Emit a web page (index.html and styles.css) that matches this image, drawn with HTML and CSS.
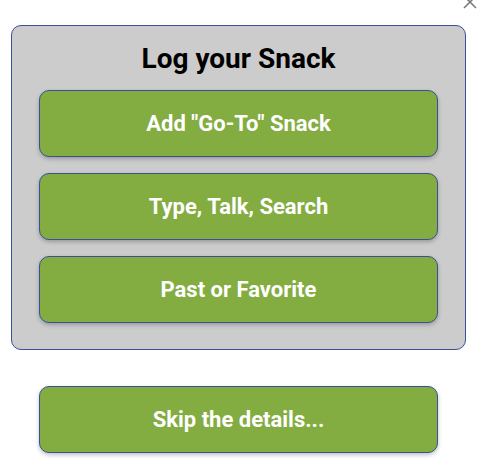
FILE: index.html
```html
<!DOCTYPE html>
<html>
<head>
<meta charset="utf-8">
<link rel="stylesheet" href="styles.css">
</head>
<body>
<div class="page">
  <button class="close" aria-label="Close">
    <svg width="16" height="16" viewBox="0 0 16 16"><path d="M2 2 L14 14 M14 2 L2 14" stroke="#7a7a7a" stroke-width="1.6" fill="none"/></svg>
  </button>
  <section class="panel">
    <h1 class="title">Log your Snack</h1>
    <div class="actions">
      <button class="btn">Add "Go-To" Snack</button>
      <button class="btn">Type, Talk, Search</button>
      <button class="btn">Past or Favorite</button>
    </div>
  </section>
  <div class="skip-row">
    <button class="btn">Skip the details...</button>
  </div>
</div>
</body>
</html>
```
FILE: styles.css
```css
* { box-sizing: border-box; }
html, body { margin: 0; padding: 0; background: #ffffff; }
body { font-family: Roboto, "Noto Sans", sans-serif; width: 480px; height: 470px; overflow: hidden; }
.page { position: relative; padding: 25px 14px 0 11px; }
.close {
  position: absolute; top: -6px; right: 2px;
  width: 16px; height: 16px; padding: 0; border: 0; background: transparent;
}
.close svg { display: block; }
.panel {
  width: 455px;
  background: #cccccc;
  border: 1px solid #3a4f9c;
  border-radius: 10px;
  padding: 0 27px 26px 27px;
}
.title {
  margin: 0; height: 64px;
  display: flex; align-items: center; justify-content: center;
  font-size: 28px; font-weight: 700; color: #000;
}
.actions { display: flex; flex-direction: column; gap: 16px; }
.btn {
  display: flex; align-items: center; justify-content: center;
  width: 399px; height: 67px;
  background: #83ac41;
  border: 1px solid #3a4f9c;
  border-radius: 10px;
  box-shadow: 0 2px 4px rgba(0,0,0,0.25);
  color: #ffffff;
  font-family: Roboto, "Noto Sans", sans-serif;
  font-size: 22px; font-weight: 700;
  padding: 0;
}
.skip-row { padding: 36px 0 0 28px; }
```
